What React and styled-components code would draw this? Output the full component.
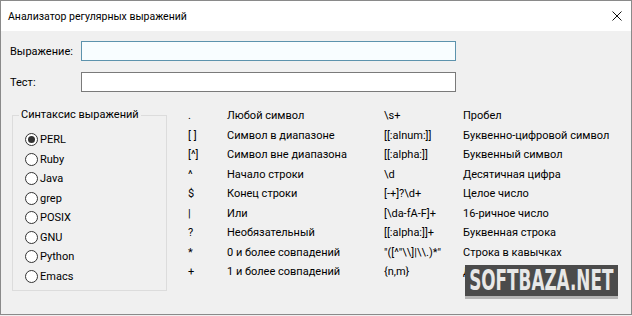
import React from 'react';
import styled, { createGlobalStyle } from 'styled-components';

const Global = createGlobalStyle`
  html, body { margin: 0; padding: 0; background: #f0f0f0; }
  body {
    font-family: Roboto, "Noto Sans", sans-serif;
    font-size: 11px;
    color: #000;
  }
`;

const Window = styled.div`
  position: relative;
  width: 632px;
  height: 315px;
  box-sizing: border-box;
  border: 1px solid #8a8a8a;
  background: #f0f0f0;
  display: flex;
  flex-direction: column;
`;

const TitleBar = styled.div`
  height: 30px;
  flex: none;
  background: #fff;
  display: flex;
  align-items: center;
  justify-content: space-between;
  padding-left: 7px;
`;

const Title = styled.span`
  font-size: 10.5px;
  color: #000;
`;

const CloseBtn = styled.div`
  width: 29px;
  height: 30px;
  display: flex;
  align-items: center;
  justify-content: center;
`;

const Body = styled.div`
  padding: 10px 0 0 9px;
  display: flex;
  flex-direction: column;
  gap: 11px;
`;

const FormRow = styled.div`
  display: grid;
  grid-template-columns: 71px 375px;
  align-items: center;
  height: 20px;
`;

const Input = styled.div`
  height: 20px;
  box-sizing: border-box;
  border: 1px solid ${p => (p.$focused ? '#5d93ad' : '#7a7a7a')};
  background: ${p => (p.$focused ? '#f8fdff' : '#fff')};
`;

const Section = styled.div`
  display: flex;
  align-items: flex-start;
  margin: 3px 0 0 2px;
  gap: 21px;
`;

const Group = styled.fieldset`
  width: 155px;
  box-sizing: border-box;
  margin: 0;
  padding: 6px 0 4px 12px;
  border: 1px solid #dcdcdc;
  min-inline-size: 0;
`;

const Legend = styled.legend`
  margin-left: -6px;
  padding: 0 2px;
  line-height: 18px;
  height: 18px;
`;

const RadioRow = styled.div`
  height: 19.5px;
  display: flex;
  align-items: center;
`;

const Circle = styled.span`
  width: 13px;
  height: 13px;
  box-sizing: border-box;
  border: 1px solid #333;
  border-radius: 50%;
  background: #fff;
  display: flex;
  align-items: center;
  justify-content: center;
  margin-right: 2px;
  &::after {
    content: '';
    display: ${p => (p.$checked ? 'block' : 'none')};
    width: 7px;
    height: 7px;
    border-radius: 50%;
    background: #333;
  }
`;

const Table = styled.div`
  display: grid;
  grid-template-columns: 39px 157px 79px auto;
  grid-auto-rows: 19.5px;
  align-items: center;
  white-space: nowrap;
`;

const Cell = styled.span``;

const Watermark = styled.div`
  position: absolute;
  left: 464px;
  top: 264px;
  width: 153px;
  height: 31px;
  background: #4b4b4b;
  border-bottom: 3px solid #b4b4b4;
  display: flex;
  align-items: center;
  justify-content: center;
`;

const WatermarkText = styled.span`
  font-family: "DejaVu Sans", sans-serif;
  font-weight: bold;
  font-size: 29px;
  line-height: 1;
  color: #e8e8e8;
  transform: scaleX(0.58);
  margin: 0 -52px;
  white-space: nowrap;
`;

const radios = ['PERL', 'Ruby', 'Java', 'grep', 'POSIX', 'GNU', 'Python', 'Emacs'];

const rows = [
  ['.', 'Любой символ', '\\s+', 'Пробел'],
  ['[ ]', 'Символ в диапазоне', '[[:alnum:]]', 'Буквенно-цифровой символ'],
  ['[^]', 'Символ вне диапазона', '[[:alpha:]]', 'Буквенный символ'],
  ['^', 'Начало строки', '\\d', 'Десятичная цифра'],
  ['$', 'Конец строки', '[-+]?\\d+', 'Целое число'],
  ['|', 'Или', '[\\da-fA-F]+', '16-ричное число'],
  ['?', 'Необязательный', '[[:alpha:]]+', 'Буквенная строка'],
  ['*', '0 и более совпадений', '"([^"\\\\]|\\\\.)*"', 'Строка в кавычках'],
  ['+', '1 и более совпадений', '{n,m}', 'Диапазон'],
];

export default function App() {
  return (
    <>
      <Global />
      <Window>
        <TitleBar>
          <Title>Анализатор регулярных выражений</Title>
          <CloseBtn>
            <svg width="10" height="10" viewBox="0 0 10 10">
              <path d="M0.5 0.5 L9.5 9.5 M9.5 0.5 L0.5 9.5" stroke="#111" strokeWidth="1" fill="none" />
            </svg>
          </CloseBtn>
        </TitleBar>
        <Body>
          <FormRow>
            <span>Выражение:</span>
            <Input $focused />
          </FormRow>
          <FormRow>
            <span>Тест:</span>
            <Input />
          </FormRow>
          <Section>
            <Group>
              <Legend>Синтаксис выражений</Legend>
              {radios.map((r, i) => (
                <RadioRow key={r}>
                  <Circle $checked={i === 0} />
                  <span>{r}</span>
                </RadioRow>
              ))}
            </Group>
            <Table>
              {rows.map((r, i) => r.map((c, j) => <Cell key={i + '-' + j}>{c}</Cell>))}
            </Table>
          </Section>
        </Body>
        <Watermark>
          <WatermarkText>SOFTBAZA.NET</WatermarkText>
        </Watermark>
      </Window>
    </>
  );
}
